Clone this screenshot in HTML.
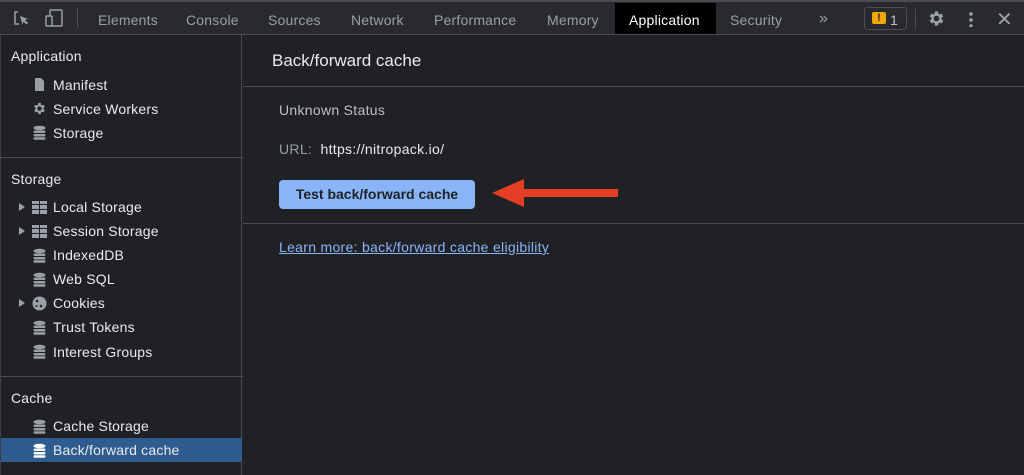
<!DOCTYPE html>
<html><head><style>
*{margin:0;padding:0;box-sizing:border-box}
body{width:1024px;height:475px;background:#202124;font-family:"Liberation Sans",sans-serif;color:#e8eaed;position:relative;overflow:hidden;font-size:14px}
.a{position:absolute;white-space:nowrap}
#top{position:absolute;left:0;top:0;width:1024px;height:35px;background:#292a2d;border-top:2px solid #4a4c50;border-bottom:1px solid #494c50}
.tab{position:absolute;top:10px;color:#9aa0a6;font-size:14px;letter-spacing:0.2px}
#side{position:absolute;left:0;top:35px;width:242px;height:440px;background:#202124;border-right:1px solid #494c50;border-left:1px solid #3c3f43}
.h{position:absolute;left:10px;font-size:14px;color:#e8eaed;letter-spacing:0.2px}
.it{position:absolute;left:52px;font-size:14px;color:#e8eaed;letter-spacing:0.2px}
.ic{position:absolute;left:31px;width:15px;height:15px}
.tri{position:absolute;left:18px;width:0;height:0;border-left:6px solid #9aa0a6;border-top:4px solid transparent;border-bottom:4px solid transparent}
.sep{position:absolute;left:0;width:242px;height:1px;background:#494c50}
.m{letter-spacing:0.3px}
</style></head><body>
<div id="top">
<svg class="a" style="left:12px;top:7px" width="18" height="18" viewBox="0 0 18 18"><path d="M6 3H3v12h4" fill="none" stroke="#9aa0a6" stroke-width="1.5"/><path d="M8 7l8 3-3 1 3 3-1.5 1.5-3-3-1 3z" fill="#9aa0a6"/></svg>
<svg class="a" style="left:44px;top:6px" width="20" height="20" viewBox="0 0 20 20"><rect x="6" y="2" width="12" height="16" rx="1" fill="none" stroke="#9aa0a6" stroke-width="1.5"/><rect x="2" y="8" width="6" height="10" rx="1" fill="#292a2d" stroke="#9aa0a6" stroke-width="1.5"/></svg>
<div class="a" style="left:77px;top:6px;width:1px;height:20px;background:#494c50"></div>
<div class="tab" style="left:98px">Elements</div>
<div class="tab" style="left:186px">Console</div>
<div class="tab" style="left:268px">Sources</div>
<div class="tab" style="left:351px">Network</div>
<div class="tab" style="left:434px">Performance</div>
<div class="tab" style="left:547px">Memory</div>
<div class="a" style="left:615px;top:1px;width:101px;height:31px;background:#000"></div>
<div class="tab" style="left:629px;color:#fff">Application</div>
<div class="tab" style="left:730px">Security</div>
<div class="tab" style="left:819px;top:8px;font-size:16px">»</div>
<div class="a" style="left:864px;top:5px;width:43px;height:23px;border:1px solid #4a4c50;border-radius:3px"></div>
<div class="a" style="left:872px;top:10px;width:14px;height:12px;background:#f2a600;border-radius:2px;color:#292a2d;font-size:11px;font-weight:bold;text-align:center;line-height:12px">!</div>
<div class="tab" style="left:890px;top:10px;color:#bdc1c6">1</div>
<div class="a" style="left:915px;top:7px;width:1px;height:20px;background:#494c50"></div>
<svg class="a" style="left:927px;top:7px" width="19" height="19" viewBox="0 0 24 24"><path fill="#9aa0a6" d="M19.4 13a7.5 7.5 0 000-2l2.1-1.6-2-3.5-2.5 1a7.3 7.3 0 00-1.7-1L15 3h-4l-.4 2.9a7.3 7.3 0 00-1.7 1l-2.5-1-2 3.5L6.6 11a7.5 7.5 0 000 2l-2.1 1.6 2 3.5 2.5-1a7.3 7.3 0 001.7 1L11 21h4l.4-2.9a7.3 7.3 0 001.7-1l2.5 1 2-3.5zM13 15.5a3.5 3.5 0 110-7 3.5 3.5 0 010 7z" transform="translate(-1 0)"/></svg>
<div class="a" style="left:969px;top:9px;width:4px;height:16px;background:radial-gradient(circle,#9aa0a6 1.6px,transparent 2px) 0 0/4px 6px"></div>
<div class="a" style="left:996px;top:5px;font-size:20px;color:#9aa0a6">✕</div>
</div>
<div id="side">
<div class="h" style="top:13px">Application</div>
<svg class="ic" style="top:42px" viewBox="0 0 15 15"><path d="M3 1h6l3 3v10H3z" fill="#9aa0a6"/></svg><div class="it" style="top:42px">Manifest</div>
<svg class="ic" style="top:66px" viewBox="0 0 24 24"><path fill="#9aa0a6" d="M19.4 13a7.5 7.5 0 000-2l2.1-1.6-2-3.5-2.5 1a7.3 7.3 0 00-1.7-1L15 3h-4l-.4 2.9a7.3 7.3 0 00-1.7 1l-2.5-1-2 3.5L6.6 11a7.5 7.5 0 000 2l-2.1 1.6 2 3.5 2.5-1a7.3 7.3 0 001.7 1L11 21h4l.4-2.9a7.3 7.3 0 001.7-1l2.5 1 2-3.5zM13 15.5a3.5 3.5 0 110-7 3.5 3.5 0 010 7z" transform="translate(-1 0)"/></svg><div class="it" style="top:66px">Service Workers</div>
<svg class="ic" style="top:90px" viewBox="0 0 15 15"><g fill="#9aa0a6"><ellipse cx="7.5" cy="3" rx="6" ry="2.3"/><rect x="1.5" y="5.5" width="12" height="2.5" rx="1.2"/><rect x="1.5" y="9" width="12" height="2.5" rx="1.2"/><rect x="1.5" y="12.3" width="12" height="2.5" rx="1.2"/></g></svg><div class="it" style="top:90px">Storage</div>
<div class="sep" style="top:122px"></div>
<div class="h" style="top:136px">Storage</div>
<div class="tri" style="top:168px"></div><svg class="ic" style="top:165px" viewBox="0 0 15 15"><g fill="#9aa0a6"><rect x="0" y="1" width="7" height="3"/><rect x="8" y="1" width="7" height="3"/><rect x="0" y="5" width="7" height="4"/><rect x="8" y="5" width="7" height="4"/><rect x="0" y="10" width="7" height="4"/><rect x="8" y="10" width="7" height="4"/></g></svg><div class="it" style="top:164px">Local Storage</div>
<div class="tri" style="top:192px"></div><svg class="ic" style="top:189px" viewBox="0 0 15 15"><g fill="#9aa0a6"><rect x="0" y="1" width="7" height="3"/><rect x="8" y="1" width="7" height="3"/><rect x="0" y="5" width="7" height="4"/><rect x="8" y="5" width="7" height="4"/><rect x="0" y="10" width="7" height="4"/><rect x="8" y="10" width="7" height="4"/></g></svg><div class="it" style="top:188px">Session Storage</div>
<svg class="ic" style="top:213px" viewBox="0 0 15 15"><g fill="#9aa0a6"><ellipse cx="7.5" cy="3" rx="6" ry="2.3"/><rect x="1.5" y="5.5" width="12" height="2.5" rx="1.2"/><rect x="1.5" y="9" width="12" height="2.5" rx="1.2"/><rect x="1.5" y="12.3" width="12" height="2.5" rx="1.2"/></g></svg><div class="it" style="top:212px">IndexedDB</div>
<svg class="ic" style="top:237px" viewBox="0 0 15 15"><g fill="#9aa0a6"><ellipse cx="7.5" cy="3" rx="6" ry="2.3"/><rect x="1.5" y="5.5" width="12" height="2.5" rx="1.2"/><rect x="1.5" y="9" width="12" height="2.5" rx="1.2"/><rect x="1.5" y="12.3" width="12" height="2.5" rx="1.2"/></g></svg><div class="it" style="top:236px">Web SQL</div>
<div class="tri" style="top:264px"></div><svg class="ic" style="top:261px" viewBox="0 0 15 15"><circle cx="7.5" cy="7.5" r="7" fill="#9aa0a6"/><circle cx="5" cy="5" r="1.3" fill="#202124"/><circle cx="9" cy="10" r="1.3" fill="#202124"/><circle cx="4.5" cy="10" r="1" fill="#202124"/></svg><div class="it" style="top:260px">Cookies</div>
<svg class="ic" style="top:285px" viewBox="0 0 15 15"><g fill="#9aa0a6"><ellipse cx="7.5" cy="3" rx="6" ry="2.3"/><rect x="1.5" y="5.5" width="12" height="2.5" rx="1.2"/><rect x="1.5" y="9" width="12" height="2.5" rx="1.2"/><rect x="1.5" y="12.3" width="12" height="2.5" rx="1.2"/></g></svg><div class="it" style="top:284px">Trust Tokens</div>
<svg class="ic" style="top:309px" viewBox="0 0 15 15"><g fill="#9aa0a6"><ellipse cx="7.5" cy="3" rx="6" ry="2.3"/><rect x="1.5" y="5.5" width="12" height="2.5" rx="1.2"/><rect x="1.5" y="9" width="12" height="2.5" rx="1.2"/><rect x="1.5" y="12.3" width="12" height="2.5" rx="1.2"/></g></svg><div class="it" style="top:309px">Interest Groups</div>
<div class="sep" style="top:341px"></div>
<div class="h" style="top:355px">Cache</div>
<svg class="ic" style="top:384px" viewBox="0 0 15 15"><g fill="#9aa0a6"><ellipse cx="7.5" cy="3" rx="6" ry="2.3"/><rect x="1.5" y="5.5" width="12" height="2.5" rx="1.2"/><rect x="1.5" y="9" width="12" height="2.5" rx="1.2"/><rect x="1.5" y="12.3" width="12" height="2.5" rx="1.2"/></g></svg><div class="it" style="top:383px">Cache Storage</div>
<div class="a" style="left:0;top:403px;width:241px;height:24px;background:#2f5c8f"></div>
<svg class="ic" style="top:408px" viewBox="0 0 15 15"><g fill="#fff"><ellipse cx="7.5" cy="3" rx="6" ry="2.3"/><rect x="1.5" y="5.5" width="12" height="2.5" rx="1.2"/><rect x="1.5" y="9" width="12" height="2.5" rx="1.2"/><rect x="1.5" y="12.3" width="12" height="2.5" rx="1.2"/></g></svg><div class="it" style="top:407px">Back/forward cache</div>
</div>
<div class="a" style="left:272px;top:51px;font-size:17px;color:#e8eaed">Back/forward cache</div>
<div class="a" style="left:243px;top:86px;width:781px;height:1px;background:#494c50"></div>
<div class="a m" style="left:279px;top:102px;color:#bdc1c6">Unknown Status</div>
<div class="a m" style="left:279px;top:141px;color:#9aa0a6">URL:&nbsp; <span style="color:#e8eaed">https://nitropack.io/</span></div>
<div class="a" style="left:279px;top:180px;width:196px;height:29px;background:#8ab4f8;border-radius:4px;color:#202124;text-align:center;line-height:29px;font-weight:bold">Test back/forward cache</div>
<svg class="a" style="left:488px;top:176px" width="135" height="34" viewBox="0 0 135 34"><path d="M4 17L36 3v10h94v8H36v10z" fill="#e43d23"/></svg>
<div class="a" style="left:243px;top:223px;width:781px;height:1px;background:#494c50"></div>
<div class="a m" style="left:279px;top:239px;color:#8ab4f8;text-decoration:underline">Learn more: back/forward cache eligibility</div>
</body></html>
